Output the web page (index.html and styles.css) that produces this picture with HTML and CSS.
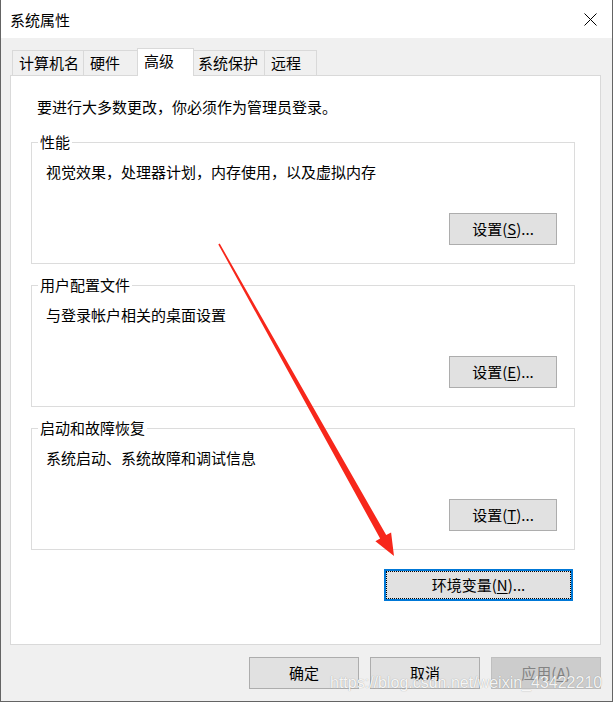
FILE: index.html
```html
<!DOCTYPE html>
<html lang="zh-CN">
<head>
<meta charset="utf-8">
<title>系统属性</title>
<link rel="stylesheet" href="styles.css">
</head>
<body>
<div class="window">
  <div class="titlebar">
    <span class="title">系统属性</span>
    <svg class="close" viewBox="0 0 13 13" width="13" height="13"><path d="M0.5 0.5 L12.5 12.5 M12.5 0.5 L0.5 12.5" stroke="#000" stroke-width="1" fill="none"/></svg>
  </div>
  <div class="content">
    <div class="tabs">
      <div class="tab w1">计算机名</div>
      <div class="tab w2">硬件</div>
      <div class="tab w3 active">高级</div>
      <div class="tab w4">系统保护</div>
      <div class="tab w5">远程</div>
    </div>
    <div class="panel">
      <p class="note">要进行大多数更改，你必须作为管理员登录。</p>
      <fieldset class="group">
        <legend>性能</legend>
        <div class="group-body">
          <p class="desc">视觉效果，处理器计划，内存使用，以及虚拟内存</p>
          <button class="btn set">设置(<u>S</u>)...</button>
        </div>
      </fieldset>
      <fieldset class="group">
        <legend>用户配置文件</legend>
        <div class="group-body">
          <p class="desc">与登录帐户相关的桌面设置</p>
          <button class="btn set">设置(<u>E</u>)...</button>
        </div>
      </fieldset>
      <fieldset class="group">
        <legend>启动和故障恢复</legend>
        <div class="group-body">
          <p class="desc">系统启动、系统故障和调试信息</p>
          <button class="btn set">设置(<u>T</u>)...</button>
        </div>
      </fieldset>
      <div class="env-row">
        <button class="btn env">环境变量(<u>N</u>)...</button>
      </div>
    </div>
    <div class="actions">
      <button class="btn act">确定</button>
      <button class="btn act">取消</button>
      <button class="btn act disabled">应用(<u>A</u>)</button>
    </div>
  </div>
  <svg class="arrow" width="613" height="702" viewBox="0 0 613 702">
    <polygon points="218.3,244.4 380.1,538.5 375.4,541.2 394,556 391.1,532.4 386.2,535.1 219.7,243.6" fill="#f7271b"/>
  </svg>
  <div class="watermark">https://blog.csdn.net/weixin_43422210</div>
</div>
</body>
</html>
```

FILE: styles.css
```css
* {
  box-sizing: border-box;
}

html,
body {
  margin: 0;
  padding: 0;
}

body {
  width: 613px;
  height: 702px;
  overflow: hidden;
  background: #f0f0f0;
  color: #000;
  font-family: "Noto Sans CJK SC", "Noto Sans", sans-serif;
  font-size: 15px;
  line-height: 20px;
}

.window {
  position: relative;
  width: 613px;
  height: 702px;
  background: #f0f0f0;
  border: 1px solid #646464;
  border-top: none;
}

.titlebar {
  height: 38px;
  background: #fff;
  display: flex;
  align-items: center;
  justify-content: space-between;
  padding: 2px 15px 0 9px;
}

.title {
  line-height: 20px;
}

.close {
  display: block;
  margin-top: -2px;
}

.content {
  padding: 10px 11px 0 9px;
}

.tabs {
  position: relative;
  z-index: 1;
  display: flex;
  align-items: flex-end;
  height: 28px;
  margin-left: 2px;
  margin-bottom: -1px;
}

.tab {
  height: 26px;
  margin-left: -1px;
  padding-left: 6px;
  border: 1px solid #d9d9d9;
  background: #f0f0f0;
  display: flex;
  align-items: center;
  justify-content: flex-start;
  white-space: nowrap;
}

.tab.w1 { width: 72px; margin-left: 0; }
.tab.w2 { width: 55px; }
.tab.w3 { width: 57px; }
.tab.w4 { width: 72px; padding-left: 4px; }
.tab.w5 { width: 53px; }

.tab.active {
  height: 28px;
  background: #fff;
  border-bottom: none;
  padding-bottom: 4px;
}

.panel {
  width: 591px;
  height: 570px;
  background: #fff;
  border: 1px solid #d9d9d9;
  padding: 21px 0 0 20px;
}

.note {
  margin: 0 0 15px 6px;
}

.group {
  width: 544px;
  margin: 0;
  padding: 0;
  min-inline-size: 0;
  border: 1px solid #dcdcdc;
}

.group + .group {
  margin-top: 11px;
}

.group legend {
  margin-left: 6px;
  padding: 0 2px;
  line-height: 20px;
}

.group-body {
  height: 111px;
  display: flex;
  flex-direction: column;
  align-items: flex-start;
  padding: 10px 17px 18px 14px;
}

.desc {
  margin: 0;
}

.btn {
  height: 32px;
  padding: 0;
  border: 1px solid #adadad;
  background: #e1e1e1;
  color: #000;
  font-family: inherit;
  font-size: 15px;
  line-height: 20px;
}

.btn u {
  text-decoration-thickness: 1px;
  text-underline-offset: 2px;
}

.btn.set {
  width: 108px;
  margin-top: auto;
  align-self: flex-end;
}

.env-row {
  display: flex;
  justify-content: flex-end;
  margin-top: 19px;
  padding-right: 27px;
}

.btn.env {
  width: 189px;
  border: 2px solid #0078d7;
  outline: 1px dotted #000;
  outline-offset: -3px;
}

.actions {
  display: flex;
  gap: 11px;
  margin: 12px 0 0 239px;
}

.btn.act {
  width: 111px;
}

.btn.disabled {
  background: #cccccc;
  border-color: #bfbfbf;
  color: #838383;
}

.arrow {
  position: absolute;
  left: -1px;
  top: 0;
  pointer-events: none;
}

.watermark {
  position: absolute;
  left: 329px;
  top: 674px;
  font-family: "Liberation Sans", Arial, sans-serif;
  font-size: 16px;
  line-height: 18px;
  color: rgba(255, 255, 255, 0.92);
  text-shadow: 0 0 1px rgba(0, 0, 0, 0.35);
  white-space: nowrap;
  pointer-events: none;
}
```
